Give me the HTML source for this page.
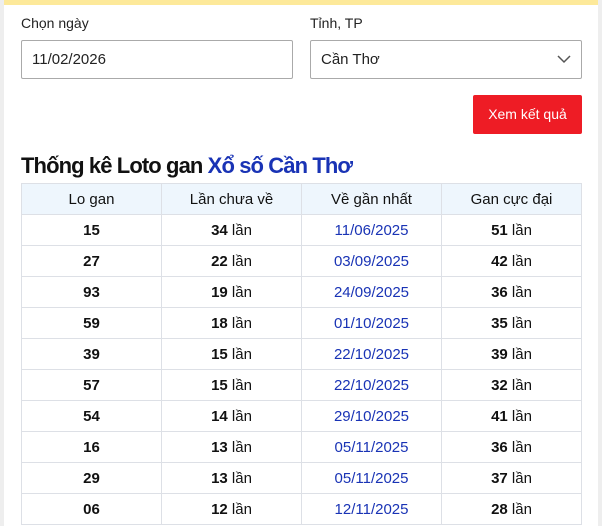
<!DOCTYPE html>
<html><head><meta charset="utf-8"><style>
*{box-sizing:border-box;margin:0;padding:0}
body{width:602px;height:526px;overflow:hidden;background:#eee;font-family:"Liberation Sans",sans-serif;position:relative}
.wrap{position:absolute;left:4px;top:0;width:594px;height:526px;background:#fff;border-top:5px solid #fde99a}
.lbl{position:absolute;top:15px;font-size:14px;color:#222}
.inp{position:absolute;top:40px;height:39px;border:1px solid #aaa;border-radius:2px;font-size:15px;color:#222;padding:10px 10px;line-height:18px}
.btn{position:absolute;left:473px;top:95px;width:109px;height:39px;background:#ee1c25;color:#fff;font-size:14px;text-align:center;line-height:39px;border-radius:2px}
h2{position:absolute;left:21px;top:153px;font-size:22px;font-weight:bold;color:#111;letter-spacing:-0.9px}
h2 span{color:#1933b5}
table{position:absolute;left:21px;top:183px;width:561px;border-collapse:collapse;font-size:15px}
td,th{border:1px solid #dde0e6;height:31px;text-align:center;width:140px;color:#111}
th{background:#eef6fd;font-weight:normal}
td b{font-weight:bold}
td.d{color:#1933b5}
</style></head><body>
<div class="wrap"></div>
<div class="lbl" style="left:21px">Chọn ngày</div>
<div class="lbl" style="left:310px">Tỉnh, TP</div>
<div class="inp" style="left:21px;width:272px">11/02/2026</div>
<div class="inp" style="left:310px;width:272px">Cần Thơ
<svg style="position:absolute;right:10px;top:14px" width="14" height="9" viewBox="0 0 14 9"><path d="M1 1l6 6 6-6" fill="none" stroke="#555" stroke-width="1.5"/></svg></div>
<div class="btn">Xem kết quả</div>
<h2>Thống kê Loto gan <span>Xổ số Cần Thơ</span></h2>
<table>
<tr><th>Lo gan</th><th>Lần chưa về</th><th>Về gần nhất</th><th>Gan cực đại</th></tr>
<tr><td><b>15</b></td><td><b>34</b> lần</td><td class="d">11/06/2025</td><td><b>51</b> lần</td></tr>
<tr><td><b>27</b></td><td><b>22</b> lần</td><td class="d">03/09/2025</td><td><b>42</b> lần</td></tr>
<tr><td><b>93</b></td><td><b>19</b> lần</td><td class="d">24/09/2025</td><td><b>36</b> lần</td></tr>
<tr><td><b>59</b></td><td><b>18</b> lần</td><td class="d">01/10/2025</td><td><b>35</b> lần</td></tr>
<tr><td><b>39</b></td><td><b>15</b> lần</td><td class="d">22/10/2025</td><td><b>39</b> lần</td></tr>
<tr><td><b>57</b></td><td><b>15</b> lần</td><td class="d">22/10/2025</td><td><b>32</b> lần</td></tr>
<tr><td><b>54</b></td><td><b>14</b> lần</td><td class="d">29/10/2025</td><td><b>41</b> lần</td></tr>
<tr><td><b>16</b></td><td><b>13</b> lần</td><td class="d">05/11/2025</td><td><b>36</b> lần</td></tr>
<tr><td><b>29</b></td><td><b>13</b> lần</td><td class="d">05/11/2025</td><td><b>37</b> lần</td></tr>
<tr><td><b>06</b></td><td><b>12</b> lần</td><td class="d">12/11/2025</td><td><b>28</b> lần</td></tr>
</table>
</body></html>
